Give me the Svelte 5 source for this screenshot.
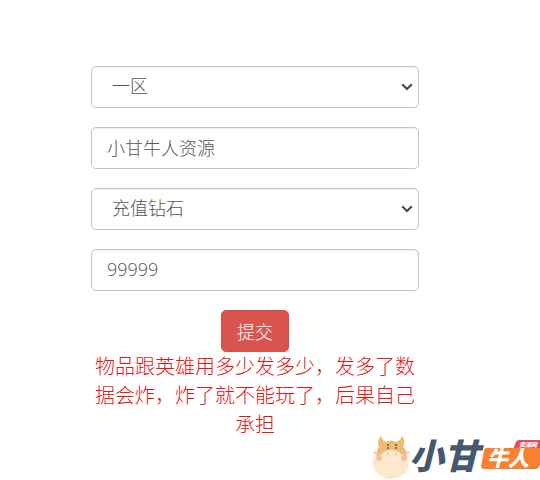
<script lang="ts">
	const zones = ['一区'];
	const actions = ['充值钻石'];

	let zone = $state('一区');
	let account = $state('小甘牛人资源');
	let action = $state('充值钻石');
	let amount = $state('99999');

	function handleSubmit(event: Event) {
		event.preventDefault();
	}
</script>

{#snippet chevron()}
	<svg class="chevron" viewBox="0 0 12 8" aria-hidden="true">
		<path d="M1.2 1.2 6 6 10.8 1.2" fill="none" stroke="#484848" stroke-width="2" />
	</svg>
{/snippet}

<main>
	<form onsubmit={handleSubmit}>
		<div class="field">
			<select class="control" aria-label="选择区服" bind:value={zone}>
				{#each zones as item}
					<option value={item}>{item}</option>
				{/each}
			</select>
			{@render chevron()}
		</div>
		<div class="field">
			<input class="control" type="text" aria-label="账号" bind:value={account} />
		</div>
		<div class="field">
			<select class="control" aria-label="选择类型" bind:value={action}>
				{#each actions as item}
					<option value={item}>{item}</option>
				{/each}
			</select>
			{@render chevron()}
		</div>
		<div class="field">
			<input class="control" type="text" aria-label="数量" bind:value={amount} />
		</div>
		<button type="submit">提交</button>
		<p class="notice">物品跟英雄用多少发多少，发多了数据会炸，炸了就不能玩了，后果自己承担</p>
	</form>
</main>

<svg class="logo" viewBox="0 0 170 48" role="img" aria-label="小甘牛人资源网">
	<!-- cow: face, hair with horns, eyes and cheeks -->
	<ellipse cx="21" cy="31" rx="18" ry="16" fill="#fde8cd" />
	<path d="M7 24c-1-4 0-7 2-9-2-4-1-8 2-11 1 3 2 5 5 6q5-3 10 0c3-1 5-3 6-6 3 3 3 7 1 11 3 2 4 5 3 9l-5-2q-4-4-10-4t-9 4z" fill="#edbd76" />
	<path d="M7 20l-3-1q-2 1 0 3l3 1zM36 20l3-1q2 1 0 3l-3 1z" fill="#f6d2a6" />
	<g fill="#75522f">
		<circle cx="18" cy="13" r="1" />
		<circle cx="26" cy="13" r="1" />
		<circle cx="18" cy="16" r="1" />
		<circle cx="26" cy="16" r="1" />
	</g>
	<g fill="#f8b9ab">
		<circle cx="9" cy="26" r="3" />
		<circle cx="34" cy="26" r="3" />
	</g>
	<g fill="#f0b99c">
		<circle cx="18" cy="22" r="1" />
		<circle cx="26" cy="22" r="1" />
	</g>
	<text class="brand" x="39" y="37">小甘</text>
	<path d="M149 8h21v9h-27l3-7q1-2 3-2z" fill="#ea4c5a" />
	<path d="M117 16h53v16q-1 5-4 5h-51q-4 0-4-3l3-15q0-3 3-3z" fill="#f9802f" />
	<text class="tag" x="117" y="34">牛人</text>
	<text class="corner" x="149" y="15">资源网</text>
</svg>

<style>
	:global(body) {
		margin: 0;
		background: #fff;
	}

	main {
		padding: 66px 121px 0 91px;
		font-family: 'Open Sans', 'Noto Sans CJK SC', sans-serif;
		font-weight: 300;
	}

	form {
		display: flex;
		flex-direction: column;
		align-items: center;
	}

	.field {
		position: relative;
		width: 100%;
		margin-bottom: 19px;
	}

	.control {
		display: block;
		box-sizing: border-box;
		width: 100%;
		height: 42px;
		margin: 0;
		padding: 0 15px 2px;
		border: 1px solid #c4c4c4;
		border-radius: 5px;
		background: #fff;
		box-shadow: inset 0 1px 1px rgba(0, 0, 0, 0.07);
		color: #555;
		font: inherit;
		font-size: 18px;
	}

	select.control {
		appearance: none;
		padding-left: 20px;
	}

	.chevron {
		position: absolute;
		top: 17px;
		right: 6px;
		width: 12px;
		height: 8px;
		pointer-events: none;
	}

	button {
		height: 42px;
		padding: 0 15px;
		border: 1px solid #d5504c;
		border-radius: 5px;
		background: #d9534f;
		color: #fff;
		font: inherit;
		font-size: 18px;
		cursor: pointer;
	}

	.notice {
		margin: 0;
		color: #e01818;
		font-size: 20px;
		line-height: 29px;
		text-align: center;
	}

	/* watermark in the page corner */
	.logo {
		position: absolute;
		right: 0;
		bottom: 0;
		width: 170px;
		height: 48px;
		overflow: visible;
		font-family: 'Noto Sans CJK SC', sans-serif;
		font-style: italic;
		font-weight: 900;
	}

	.brand {
		fill: #45586e;
		font-size: 35px;
	}

	.tag {
		fill: #fff;
		font-size: 21px;
	}

	.corner {
		fill: #fff;
		font-size: 6px;
	}
</style>
